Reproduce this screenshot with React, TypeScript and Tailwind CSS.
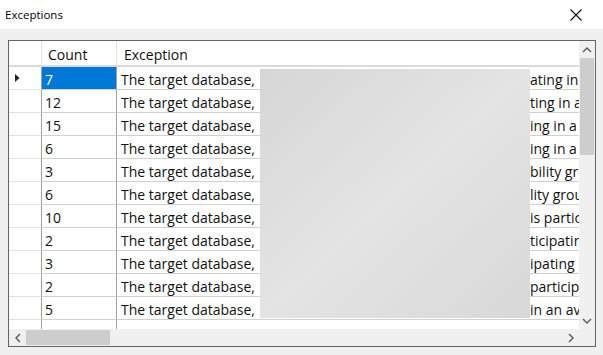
import React from 'react';

interface Row {
  count: string;
  tail: string;
}

const rows: Row[] = [
  { count: '7', tail: 'ating in' },
  { count: '12', tail: 'ting in a' },
  { count: '15', tail: 'ing in a' },
  { count: '6', tail: 'ing in a' },
  { count: '3', tail: 'bility gro' },
  { count: '6', tail: 'lity grou' },
  { count: '10', tail: 'is partic' },
  { count: '2', tail: 'ticipatin' },
  { count: '3', tail: 'ipating' },
  { count: '2', tail: 'particip' },
  { count: '5', tail: 'in an av' },
];

const Chevron = ({ dir }: { dir: 'up' | 'down' | 'left' | 'right' }) => {
  const d = {
    up: 'M1 6 L5 2 L9 6',
    down: 'M1 2 L5 6 L9 2',
    left: 'M6 1 L2 5 L6 9',
    right: 'M2 1 L6 5 L2 9',
  }[dir];
  const vertical = dir === 'up' || dir === 'down';
  return (
    <svg
      width={vertical ? 10 : 8}
      height={vertical ? 8 : 10}
      viewBox={vertical ? '0 0 10 8' : '0 0 8 10'}
      className="text-[#606060]"
    >
      <path d={d} fill="none" stroke="currentColor" strokeWidth="1.5" />
    </svg>
  );
};

export default function App() {
  return (
    <div
      className="w-[603px] h-[355px] bg-[#f0f0f0] flex flex-col overflow-hidden text-[#111]"
      style={{ fontFamily: '"Open Sans", "Noto Sans", sans-serif' }}
    >
      {/* Title bar */}
      <div className="h-[29px] bg-white flex items-center justify-between pl-[5px] pr-[21px] shrink-0">
        <span className="text-[11.5px] text-black">Exceptions</span>
        <svg width="12" height="12" viewBox="0 0 12 12">
          <path d="M0.5 0.5 L11.5 11.5 M11.5 0.5 L0.5 11.5" stroke="#111" strokeWidth="1.1" />
        </svg>
      </div>

      {/* Body */}
      <div className="pl-[8px] pt-[11px]">
        <div className="w-[588px] h-[307px] border border-[#646464] bg-white flex flex-col">
          <div className="flex flex-1 min-h-0">
            {/* Grid area */}
            <div className="relative w-[570px] overflow-hidden text-[14px] leading-none">
              {/* Header */}
              <div className="flex h-[26px] border-b-2 border-[#dadada]">
                <div className="w-[33px] border-r border-[#e3e3e3] shrink-0" />
                <div className="w-[75px] border-r border-[#e3e3e3] shrink-0 flex items-center pl-[6px] pt-[4px]">
                  Count
                </div>
                <div className="flex-1 flex items-center pl-[7px] pt-[4px]">Exception</div>
              </div>

              {/* Rows */}
              {rows.map((r, i) => (
                <div key={i} className="flex h-[23px]">
                  <div className="w-[33px] shrink-0 border-r border-b border-r-[#a0a0a0] border-b-[#e3e3e3] flex items-center pl-[6px]">
                    {i === 0 && (
                      <svg width="5" height="8" viewBox="0 0 5 8">
                        <path d="M0 0 L4.5 4 L0 8 Z" fill="#222" />
                      </svg>
                    )}
                  </div>
                  <div
                    className={`w-[75px] shrink-0 border-r border-b border-r-[#a0a0a0] border-b-[#d0d0d0] flex items-center pl-[3px] pt-[4px] ${
                      i === 0 ? 'bg-[#0078d7] text-white' : ''
                    }`}
                  >
                    {r.count}
                  </div>
                  <div className="flex-1 border-b border-[#d0d0d0] flex items-center pl-[4px] pt-[4px] whitespace-nowrap overflow-hidden">
                    <span className="w-[139px] shrink-0">The target database,</span>
                    <span className="w-[270px] shrink-0" />
                    <span>{r.tail}</span>
                  </div>
                </div>
              ))}
              {/* Partial row */}
              <div className="flex h-[23px]">
                <div className="w-[33px] shrink-0 border-r border-[#a0a0a0]" />
                <div className="w-[75px] shrink-0 border-r border-[#a0a0a0]" />
              </div>

              {/* Blurred region */}
              <div className="absolute left-[251px] top-[28px] w-[270px] h-[249px] bg-gradient-to-br from-[#d6d6d6] via-[#e4e4e4] to-[#d8d8d8]" />
            </div>

            {/* Vertical scrollbar */}
            <div className="w-[16px] bg-[#f0f0f0] flex flex-col">
              <div className="h-[17px] flex items-center justify-center">
                <Chevron dir="up" />
              </div>
              <div className="flex-1 flex flex-col">
                <div className="h-[97px] mx-[1px] bg-[#cdcdcd]" />
              </div>
              <div className="h-[17px] flex items-center justify-center">
                <Chevron dir="down" />
              </div>
            </div>
          </div>

          {/* Horizontal scrollbar */}
          <div className="h-[17px] flex shrink-0">
            <div className="w-[570px] bg-[#f0f0f0] flex items-stretch">
              <div className="w-[17px] flex items-center justify-center">
                <Chevron dir="left" />
              </div>
              <div className="flex-1 flex py-[1px]">
                <div className="w-[84px] bg-[#cdcdcd]" />
              </div>
              <div className="w-[17px] flex items-center justify-center">
                <Chevron dir="right" />
              </div>
            </div>
            <div className="w-[16px] bg-[#f0f0f0]" />
          </div>
        </div>
      </div>
    </div>
  );
}
